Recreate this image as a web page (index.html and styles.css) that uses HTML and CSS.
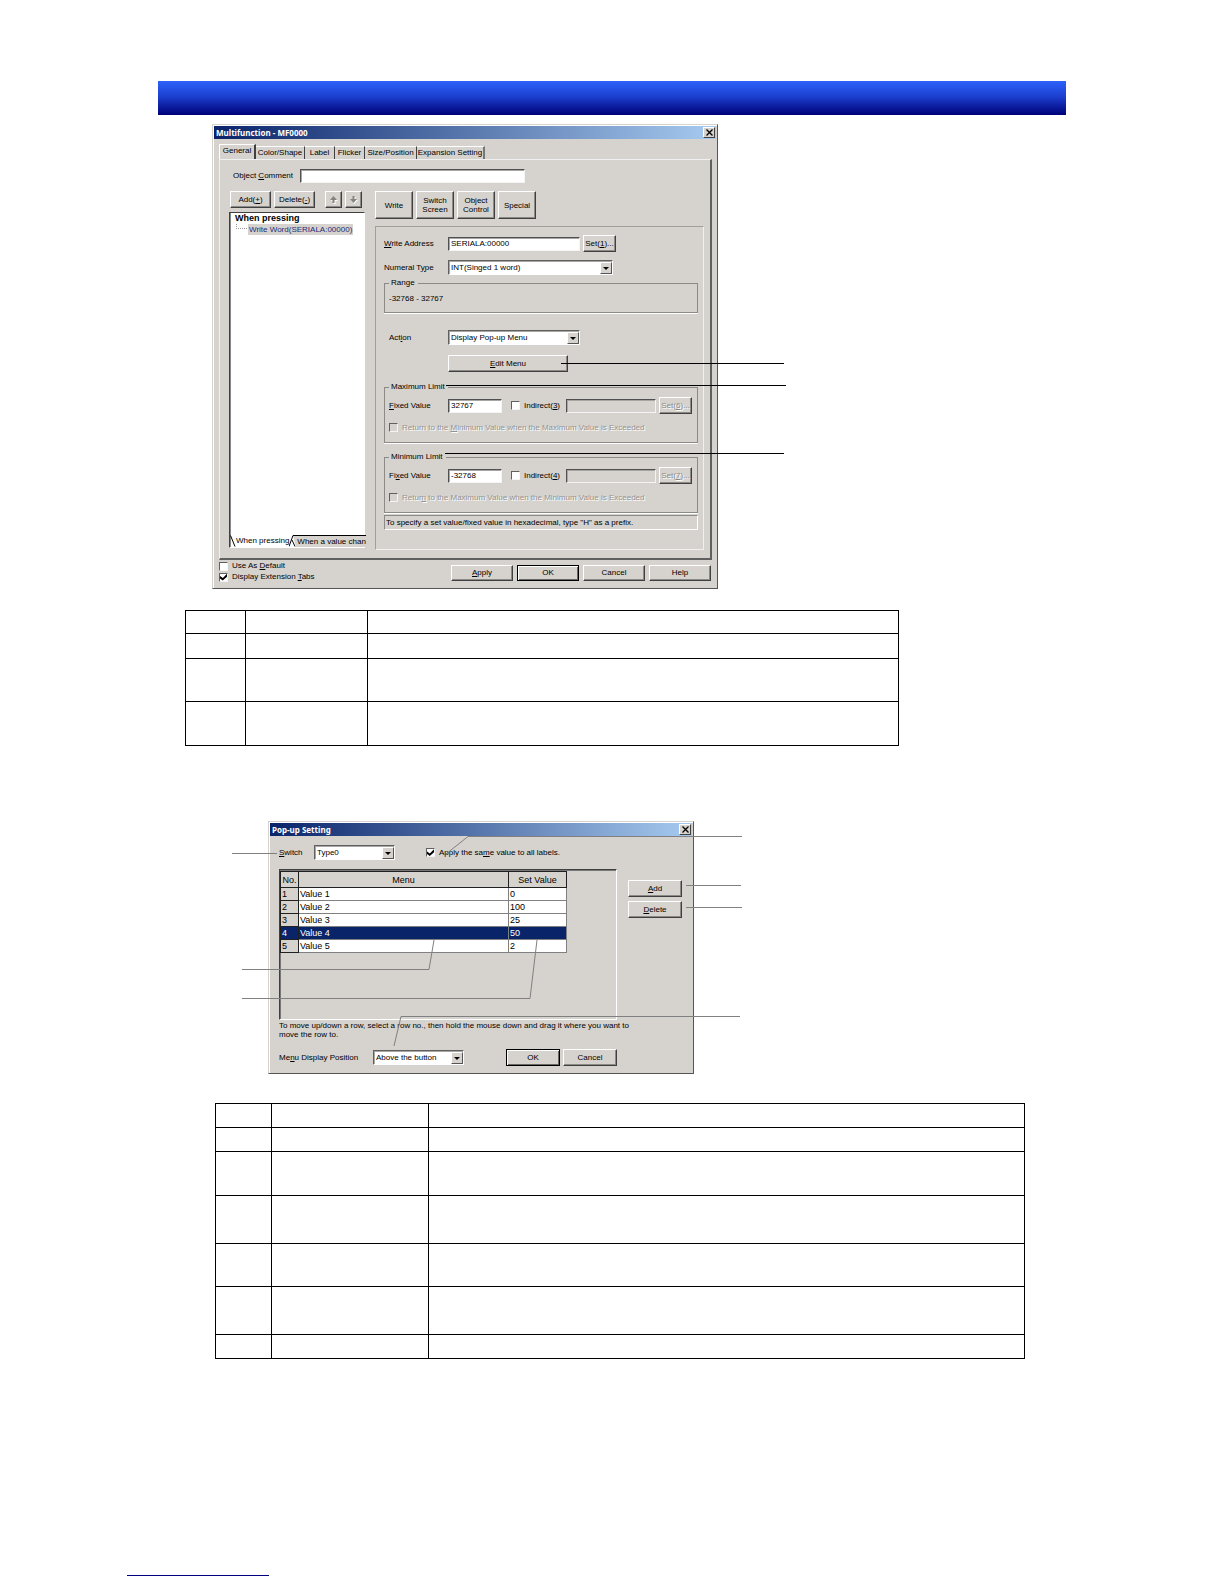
FILE: index.html
```html
<!DOCTYPE html>
<html lang="en">
<head>
<meta charset="utf-8">
<title>Multifunction Object</title>
<link rel="stylesheet" href="styles.css">
</head>
<body>

<main>
<div class="banner"></div>

<!-- Multifunction dialog -->
<div class="figure fig1">
<div class="dialog">
  <div class="titlebar"><span>Multifunction - MF0000</span>
    <button class="close" aria-label="Close"><svg width="7" height="7" viewBox="0 0 7 7"><path d="M0.5 0.5L6.5 6.5M6.5 0.5L0.5 6.5"/></svg></button>
  </div>
  <div class="tabs">
    <button class="tab on">General</button>
    <button class="tab t2">Color/Shape</button>
    <button class="tab t3">Label</button>
    <button class="tab t3">Flicker</button>
    <button class="tab t4">Size/Position</button>
    <button class="tab t5">Expansion Setting</button>
  </div>
  <div class="panel">
    <div class="comment">
      <label for="comment">Object <u>C</u>omment</label>
      <input class="text" type="text" id="comment">
    </div>
    <div class="cols">
      <div class="left">
        <div class="tools">
          <button class="btn wide">Add(<u>+</u>)</button>
          <button class="btn wide">Delete(<u>-</u>)</button>
          <button class="btn arrow up" aria-label="Move up"><svg width="8" height="8" viewBox="0 0 8 8"><path class="hi" d="M4 1L8 5H5.500V8H3.500V5H1z"/><path d="M3.500 0L7 4H4.500V7H2.500V4H0z"/></svg></button>
          <button class="btn arrow" aria-label="Move down"><svg width="8" height="8" viewBox="0 0 8 8"><path class="hi" d="M4 8L8 4H5.500V1H3.500V4H1z"/><path d="M3.500 7L7 3H4.500V0H2.500V3H0z"/></svg></button>
        </div>
        <div class="list">
          <div class="tree">
            <b>When pressing</b>
            <div class="leaf"><i class="branch"></i><span>Write Word(SERIALA:00000)</span></div>
          </div>
          <div class="sheets">
            <svg width="6" height="12" viewBox="0 0 6 12"><path d="M0.5 0.5L5 11.500"/></svg>
            <button class="sheet">When pressing</button>
            <svg class="slant" width="8" height="12" viewBox="0 0 8 12"><path class="fill" d="M4 0.500H8V12H7z"/><path d="M0 11.500L4 0.500H8M3 5L6 11.500"/></svg>
            <button class="sheet off">When a value chan</button>
          </div>
        </div>
      </div>
      <div class="right">
        <div class="kinds">
          <button class="btn">Write</button>
          <button class="btn">Switch<br>Screen</button>
          <button class="btn">Object<br>Control</button>
          <button class="btn">Special</button>
        </div>
        <div class="group">
          <div class="row">
            <label for="addr"><u>W</u>rite Address</label>
            <input class="text w132" type="text" id="addr" value="SERIALA:00000">
            <button class="btn set">Set(<u>1</u>)...</button>
          </div>
          <div class="row numeral">
            <label for="numtype">Numeral T<u>y</u>pe</label>
            <span class="combo w165"><select id="numtype"><option>INT(Singed 1 word)</option></select><i></i></span>
          </div>
          <fieldset class="range">
            <legend>Range</legend>
            <div>-32768 - 32767</div>
          </fieldset>
          <div class="row action">
            <label for="action">Act<u>i</u>on</label>
            <span class="combo w132"><select id="action"><option>Display Pop-up Menu</option></select><i></i></span>
          </div>
          <button class="btn edit"><u>E</u>dit Menu</button>
          <fieldset class="limit">
            <legend>Maximum Limit</legend>
            <div class="fixed">
              <label for="max"><u>F</u>ixed Value</label>
              <input class="text w54" type="text" id="max" value="32767">
              <input type="checkbox" id="ind3"><label class="ind" for="ind3">Indirect(<u>3</u>)</label>
              <input class="text grow" type="text" disabled aria-label="Maximum address">
              <button class="btn set" disabled>Set(<u>6</u>)...</button>
            </div>
            <div class="check off"><input type="checkbox" id="ret1" disabled><label for="ret1">Return to the <u>M</u>inimum Value when the Maximum Value is Exceeded</label></div>
          </fieldset>
          <fieldset class="limit">
            <legend>Minimum Limit</legend>
            <div class="fixed">
              <label for="min">Fi<u>x</u>ed Value</label>
              <input class="text w54" type="text" id="min" value="-32768">
              <input type="checkbox" id="ind4"><label class="ind" for="ind4">Indirect(<u>4</u>)</label>
              <input class="text grow" type="text" disabled aria-label="Minimum address">
              <button class="btn set" disabled>Set(<u>7</u>)...</button>
            </div>
            <div class="check off"><input type="checkbox" id="ret2" disabled><label for="ret2">Retur<u>n</u> to the Maximum Value when the Minimum Value is Exceeded</label></div>
          </fieldset>
          <div class="note">To specify a set value/fixed value in hexadecimal, type "H" as a prefix.</div>
        </div>
      </div>
    </div>
  </div>
  <div class="bottom">
    <div class="checks">
      <div class="check"><input type="checkbox" id="usedef"><label for="usedef">Use As <u>D</u>efault</label></div>
      <div class="check"><input type="checkbox" id="ext" checked><label for="ext">Display Extension <u>T</u>abs</label></div>
    </div>
    <button class="btn"><u>A</u>pply</button>
    <button class="btn default">OK</button>
    <button class="btn">Cancel</button>
    <button class="btn">Help</button>
  </div>
</div>
<svg class="callouts black" width="580" height="464" viewBox="0 0 580 464">
  <path d="M349 239.500H572M234 261.500H574M233 329.500H572"/>
</svg>
</div>

<table class="desc one">
  <tr class="r23"><td class="no"></td><td class="item"></td><td></td></tr>
  <tr class="r25"><td></td><td></td><td></td></tr>
  <tr class="r43"><td></td><td></td><td></td></tr>
  <tr class="r44"><td></td><td></td><td></td></tr>
</table>

<!-- Pop-up Setting dialog -->
<div class="figure fig2">
<div class="dialog">
  <div class="titlebar"><span>Pop-up Setting</span>
    <button class="close" aria-label="Close"><svg width="7" height="7" viewBox="0 0 7 7"><path d="M0.5 0.5L6.5 6.5M6.5 0.5L0.5 6.5"/></svg></button>
  </div>
  <div class="popup">
    <div class="switch">
      <label for="switch"><u>S</u>witch</label>
      <span class="combo w81"><select id="switch"><option>Type0</option></select><i></i></span>
      <div class="check"><input type="checkbox" id="same" checked><label for="same">Apply the sa<u>m</u>e value to all labels.</label></div>
    </div>
    <div class="mid">
      <div class="grid">
        <table class="values">
          <tr><th class="n">No.</th><th class="m">Menu</th><th class="v">Set Value</th></tr>
          <tr><th>1</th><td>Value 1</td><td>0</td></tr>
          <tr><th>2</th><td>Value 2</td><td>100</td></tr>
          <tr><th>3</th><td>Value 3</td><td>25</td></tr>
          <tr class="sel"><th>4</th><td>Value 4</td><td>50</td></tr>
          <tr><th>5</th><td>Value 5</td><td>2</td></tr>
        </table>
      </div>
      <div class="side">
        <button class="btn"><u>A</u>dd</button>
        <button class="btn"><u>D</u>elete</button>
      </div>
    </div>
    <p class="help">To move up/down a row, select a row no., then hold the mouse down and drag it where you want to<br>move the row to.</p>
    <div class="foot">
      <label for="pos">Me<u>n</u>u Display Position</label>
      <span class="combo w91"><select id="pos"><option>Above the button</option></select><i></i></span>
      <button class="btn default">OK</button>
      <button class="btn">Cancel</button>
    </div>
  </div>
</div>
<svg class="callouts gray" width="520" height="253" viewBox="0 0 520 253">
  <path d="M0 32.500H45M510 15.500H236L214 33M454 64.500H509M454 86.500H510M10 148.500H197L202 119M10 177.500H298L305 119M508 195.500H169L162 225"/>
</svg>
</div>

<table class="desc two">
  <tr class="r24"><td class="no"></td><td class="item"></td><td></td></tr>
  <tr class="r24"><td></td><td></td><td></td></tr>
  <tr class="r44"><td></td><td></td><td></td></tr>
  <tr class="r48"><td></td><td></td><td></td></tr>
  <tr class="r43"><td></td><td></td><td></td></tr>
  <tr class="r48"><td></td><td></td><td></td></tr>
  <tr class="r24"><td></td><td></td><td></td></tr>
</table>
</main>

<footer><hr></footer>

</body>
</html>
```

FILE: styles.css
```css
* { box-sizing: border-box; }
body { margin: 0; background: #fff; color: #000; min-height: 100vh; display: flex; flex-direction: column; }
body, button, input, select { font: 8px/10px "Liberation Sans", Arial, sans-serif; }
main { padding: 81px 158px 0; }
label, button, legend, span { white-space: nowrap; }
u { text-underline-offset: 1px; text-decoration-thickness: 1px; }

.banner { height: 34px; background: linear-gradient(#2d62fa, #1c40d0 45%, #000078); }

/* dialogs */
.figure { position: relative; }
.fig1 { margin: 9px 0 0 54px; max-width: 506px; }
.fig2 { margin: 75px 0 0 110px; max-width: 426px; }
.dialog { background: #d6d3ce; padding: 1px; border: 1px solid; border-color: #d6d3ce #555 #555 #d6d3ce; box-shadow: inset 1px 1px #fff; }
.titlebar { height: 13px; padding: 0 1px 0 2px; display: flex; justify-content: space-between; align-items: center;
	background: linear-gradient(to right, #0a246a, #a6caf0); color: #fff; font: bold 8px/12px "Noto Sans", sans-serif; }
.close { width: 12px; height: 11px; padding: 0; display: flex; align-items: center; justify-content: center;
	background: #d6d3ce; border: 1px solid; border-color: #fff #404040 #404040 #fff; }
.close path { stroke: #000; stroke-width: 1.3; }

.callouts { position: absolute; top: 0; left: 0; pointer-events: none; }
.callouts path { fill: none; }
.black path { stroke: #000; }
.gray { left: -36px; }
.gray path { stroke: #808080; }

/* controls */
.btn { background: #d6d3ce; border: 1px solid; border-color: #fff #404040 #404040 #fff; box-shadow: inset -1px -1px #8c8a86;
	padding: 0; height: 17px; color: #000; }
.btn:disabled { color: #8c8a86; text-shadow: 1px 1px #fff; }
.btn.default { border-color: #000; box-shadow: inset 1px 1px #fff, inset -1px -1px #6a6864; }
.text { height: 14px; padding: 0 2px; border: 1px solid; border-color: #505050 #f4f4f4 #f4f4f4 #505050; background: #fff;
	box-shadow: inset 1px 1px #a8a6a2; min-width: 0; }
.text:disabled { background: #d6d3ce; }
.combo { display: grid; height: 15px; border: 1px solid; border-color: #606060 #fff #fff #606060; background: #fff; box-shadow: inset 1px 1px #a8a6a2; }
.combo select { grid-area: 1 / 1; appearance: none; border: 0; background: none; padding: 0 2px; color: #000; min-width: 0; }
.combo i { grid-area: 1 / 1; justify-self: end; width: 12px; margin: 1px 0 0; pointer-events: none; display: grid; place-items: center;
	background: #d6d3ce; border: 1px solid; border-color: #fff #555 #555 #fff; }
.combo i::before { content: ""; border: 3px solid transparent; border-top-color: #000; border-bottom: 0; }
input[type=checkbox] { appearance: none; flex: none; width: 9px; height: 9px; margin: 0; background: #fff; display: grid;
	border: 1px solid; border-color: #606060 #f4f4f4 #f4f4f4 #606060; }
input[type=checkbox]:disabled { background: #d6d3ce; }
input[type=checkbox]:checked::before { content: ""; background: #000; clip-path: polygon(0 35%, 40% 65%, 100% 5%, 100% 45%, 40% 100%, 0 70%); }
.check { display: flex; align-items: center; gap: 4px; }
.check.off { color: #94928e; text-shadow: 1px 1px #fff; }
.w54 { width: 54px; }
.w81 { width: 81px; }
.w91 { width: 91px; }
.w132 { width: 132px; }
.w165 { width: 165px; }
.grow { flex: 1; }

/* tabs */
.tabs { display: flex; align-items: flex-end; margin: 5px 4px 0 5px; height: 15px; }
.tab { height: 13px; padding: 0; background: none; border: 0 solid; border-width: 1px 1px 0 0; border-color: #fff #404040; }
.tab.on { width: 37px; height: 15px; border-left: 1px solid #fff; border-right-width: 2px; padding-bottom: 2px; }
.t2 { width: 49px; }
.t3 { width: 30px; }
.t4 { width: 52px; }
.t5 { width: 68px; border-right: 2px solid #777; }
.panel { margin: 0 4px 0 5px; padding: 9px 6px 8px 9px; border: 1px solid; border-width: 1px 2px 2px 1px; border-color: #f0f0f0 #606060 #606060 #f0f0f0; }
.comment { display: flex; align-items: center; padding-left: 4px; }
.comment label { width: 67px; }
.comment input { width: 225px; }
.cols { display: grid; grid-template-columns: 136px minmax(0, 1fr); gap: 10px; margin-top: 8px; }
.left, .right { display: flex; flex-direction: column; }
.left { gap: 4px; padding-bottom: 2px; }
.right { gap: 7px; }
.tools { display: flex; gap: 3px; padding-left: 1px; }
.wide { width: 41px; }
.arrow { width: 17px; display: grid; place-items: center; }
.up { margin-left: 7px; }
.arrow path { fill: #85837f; }
.arrow .hi { fill: #fff; }
.list { flex: 1; display: flex; flex-direction: column; background: #fff; border: 1px solid; border-color: #404040 #fff #fff #404040; box-shadow: inset 1px 0 #888; }
.tree { flex: 1; padding: 0 5px; }
.tree b { display: block; font-size: 9px; line-height: 11px; }
.leaf { display: flex; }
.leaf span { background: #d6d3ce; color: #1c2c78; padding: 0 1px; line-height: 11px; }
.branch { width: 11px; height: 5px; margin: 0 1px; border: 1px dotted #999; border-width: 0 0 1px 1px; }
.sheets { display: flex; height: 12px; }
.sheets svg { flex: none; }
.sheets path { fill: none; stroke: #000; }
.sheets .fill { fill: #d6d3ce; stroke: none; }
.sheet { background: #fff; border: 0; padding: 0; }
.sheet.off { flex: 1; background: #d6d3ce; border-top: 1px solid #000; text-align: left; }

.kinds { display: flex; gap: 3px; }
.kinds .btn { width: 38px; height: 28px; line-height: 9px; }
.group { display: flex; flex-direction: column; padding: 8px 5px 19px 8px; border: 1px solid; border-color: #a09e9a #f0f0f0 #f0f0f0 #a09e9a; }
.row { display: flex; align-items: center; }
.row > label { width: 64px; }
.set { width: 33px; margin-left: 3px; }
.numeral { margin-top: 8px; }
fieldset { margin: 3px 0 0; padding: 5px; min-width: 0; border: 1px solid #8c8a86; box-shadow: 0 1px #fff; }
legend { padding: 0 3px 0 2px; }
.range { padding: 6px 4px 8px; }
.action { margin-top: 17px; padding-left: 5px; }
.action > label { width: 59px; }
.edit { width: 120px; margin: 10px 0 7px 64px; }
.limit { padding: 5px 5px 10px 4px; }
.limit + .limit { margin-top: 9px; }
.fixed { display: flex; align-items: center; }
.fixed > label { width: 59px; }
.fixed input[type=checkbox] { margin-left: 9px; }
.fixed .ind { width: 46px; padding-left: 4px; }
.limit .check { margin-top: 9px; height: 9px; }
.note { margin-top: 2px; padding: 2px 1px; height: 15px; border: 1px solid; border-color: #8c8a86 #fff #fff #8c8a86; white-space: nowrap; }
.bottom { display: flex; gap: 4px; padding: 5px; }
.bottom .btn { width: 62px; height: 16px; }
.checks { flex: 1; margin-top: -4px; display: flex; flex-direction: column; gap: 1px; }

/* pop-up dialog */
.popup { padding: 9px 10px 6px 9px; }
.switch { display: flex; align-items: center; }
.switch > label { width: 35px; }
.switch .check { margin-left: 31px; }
.popup .mid { display: flex; gap: 11px; margin-top: 9px; }
.grid { flex: 1; height: 151px; border: 1px solid; border-color: #404040 #fff #fff #404040; box-shadow: inset 1px 1px #777; padding-top: 1px; }
.side { display: flex; flex-direction: column; gap: 4px; padding-top: 11px; }
.side .btn { width: 54px; }
.values { border-collapse: collapse; font-size: 9px; }
.values tr { height: 13px; }
.values tr:first-child { height: 16px; }
.values th, .values td { padding: 0 1px; border: 1px solid #808080; }
.values td { background: #fff; }
.values th { font-weight: normal; text-align: left; border-color: #202020; background: #d6d3ce; }
.values tr:first-child th { text-align: center; }
.values .n { width: 18px; padding: 0; }
.values .m { width: 210px; }
.values .v { width: 58px; }
.values .sel th, .values .sel td { background: #0a246a; color: #fff; }
.help { margin: 1px 0 0; white-space: nowrap; line-height: 9px; }
.foot { display: flex; align-items: center; margin-top: 10px; }
.foot label { width: 94px; }
.foot .btn { width: 54px; margin-left: 3px; }
.foot .default { margin-left: 42px; }

/* description tables */
.desc { border-collapse: collapse; table-layout: fixed; width: 100%; }
.desc td { border: 1px solid #000; padding: 0; }
.one { margin: 21px 0 0 27px; max-width: 714px; }
.two { margin: 29px 0 0 57px; max-width: 810px; }
.one .no { width: 60px; }
.one .item { width: 122px; }
.two .no { width: 56px; }
.two .item { width: 157px; }
.r23 { height: 23px; }
.r24 { height: 24px; }
.r25 { height: 25px; }
.r43 { height: 43px; }
.r44 { height: 44px; }
.r48 { height: 48px; }

footer { margin-top: auto; padding: 0 127px 8px; }
footer hr { max-width: 142px; margin: 0; border: 0; height: 1px; background: #000080; }
```
